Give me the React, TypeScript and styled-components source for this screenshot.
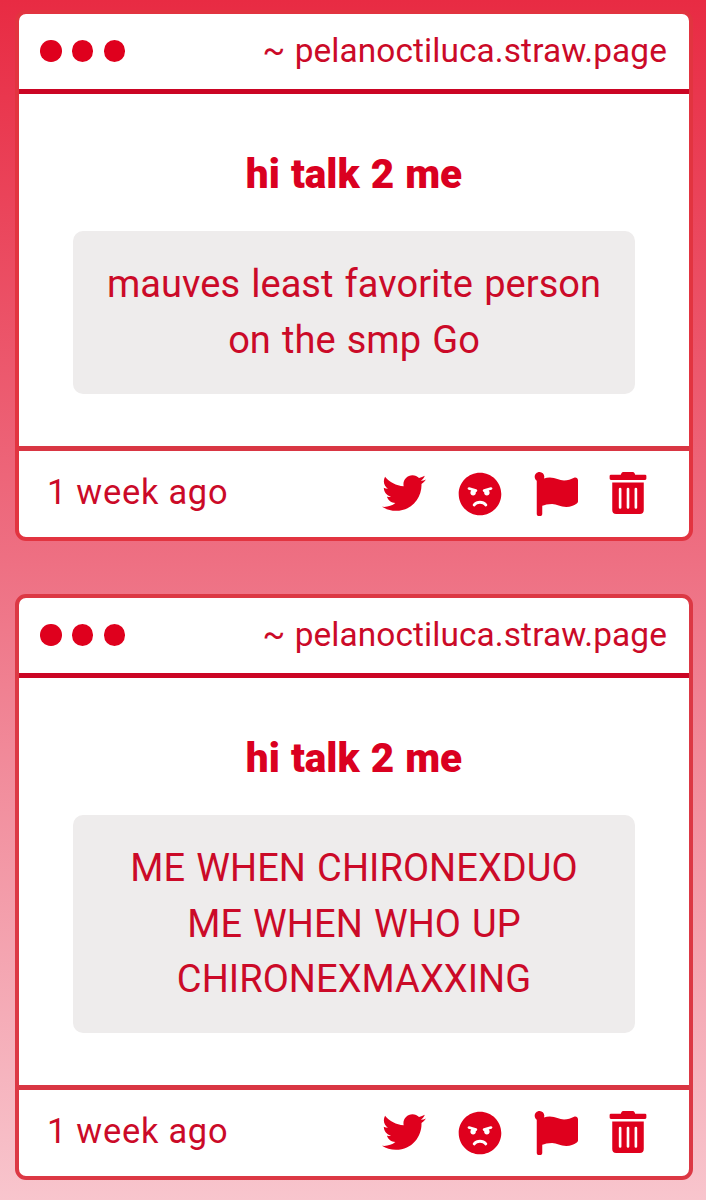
import React from "react";
import styled, { createGlobalStyle } from "styled-components";
import { FaTwitter, FaAngry, FaFlag, FaTrashAlt } from "react-icons/fa";

const GlobalStyle = createGlobalStyle`
  *, *::before, *::after { box-sizing: border-box; }
  html, body { margin: 0; padding: 0; }
  body { font-family: Roboto, "Liberation Sans", sans-serif; color: #cb0a28; }
`;

const Page = styled.main`
  height: 1200px;
  overflow: hidden;
  padding: 10px 13px 0 15px;
  display: flex;
  flex-direction: column;
  gap: 53px;
  background: linear-gradient(180deg, #e82b43 0%, #ee7083 47%, #f8c5cd 100%);
`;

const Card = styled.article<{ $height: number; $edge: string }>`
  height: ${(p) => p.$height}px;
  flex: none;
  display: flex;
  flex-direction: column;
  border: 4px solid ${(p) => p.$edge};
  border-radius: 11px;
  background: #fff;
`;

const Header = styled.header`
  height: 80px;
  flex: none;
  display: flex;
  align-items: center;
  justify-content: space-between;
  padding: 0 22px 1px 21px;
  border-bottom: 5px solid #cb0524;
`;

const Dots = styled.div`
  display: flex;
  gap: 10.3px;
`;

const Dot = styled.span`
  width: 21.5px;
  height: 21.5px;
  border-radius: 50%;
  background: #df001d;
`;

const Address = styled.span`
  font-size: 33.4px;
  line-height: 40px;
  letter-spacing: 0.1px;
  word-spacing: 1px;
  white-space: nowrap;
`;

const Body = styled.section`
  flex: 1;
  padding: 55px 54px 0;
`;

const Title = styled.h2`
  margin: 0 0 32px;
  font-size: 40.5px;
  line-height: 50px;
  font-weight: 900;
  word-spacing: 1px;
  text-align: center;
  color: #da0020;
`;

const Message = styled.div`
  padding: 26.4px 0 25.8px;
  border-radius: 10px;
  background: #eeecec;
  font-size: 38px;
  line-height: 55.15px;
  letter-spacing: 0.05px;
  word-spacing: 1.6px;
  text-align: center;
  white-space: nowrap;
`;

const Footer = styled.footer`
  height: 91px;
  flex: none;
  display: flex;
  align-items: center;
  justify-content: space-between;
  padding: 0 40px 0 28px;
  border-top: 5px solid #d93643;
`;

const Time = styled.time`
  padding-bottom: 4px;
  font-size: 34.4px;
  line-height: 40px;
  letter-spacing: 0.75px;
`;

const Actions = styled.div`
  display: flex;
  align-items: flex-start;
  gap: 32px;
  padding-bottom: 1px;
  color: #df001d;

  svg { display: block; }
  svg:first-child { margin-top: -1px; }
  svg:last-child { margin-left: -3px; }
`;

type PostProps = { height: number; edge: string; lines: string[] };

function Post({ height, edge, lines }: PostProps) {
  return (
    <Card $height={height} $edge={edge}>
      <Header>
        <Dots>
          <Dot />
          <Dot />
          <Dot />
        </Dots>
        <Address>~ pelanoctiluca.straw.page</Address>
      </Header>
      <Body>
        <Title>hi talk 2 me</Title>
        <Message>
          {lines.map((line) => (
            <div key={line}>{line}</div>
          ))}
        </Message>
      </Body>
      <Footer>
        <Time>1 week ago</Time>
        <Actions>
          <FaTwitter size={44} />
          <FaAngry size={44} />
          <FaFlag size={44} />
          <FaTrashAlt size={42} />
        </Actions>
      </Footer>
    </Card>
  );
}

export default function App() {
  return (
    <>
      <GlobalStyle />
      <Page>
        <Post
          height={531}
          edge="#e23440"
          lines={["mauves least favorite person", "on the smp Go"]}
        />
        <Post
          height={586}
          edge="#dc3844"
          lines={["ME WHEN CHIRONEXDUO", "ME WHEN WHO UP", "CHIRONEXMAXXING"]}
        />
      </Page>
    </>
  );
}
